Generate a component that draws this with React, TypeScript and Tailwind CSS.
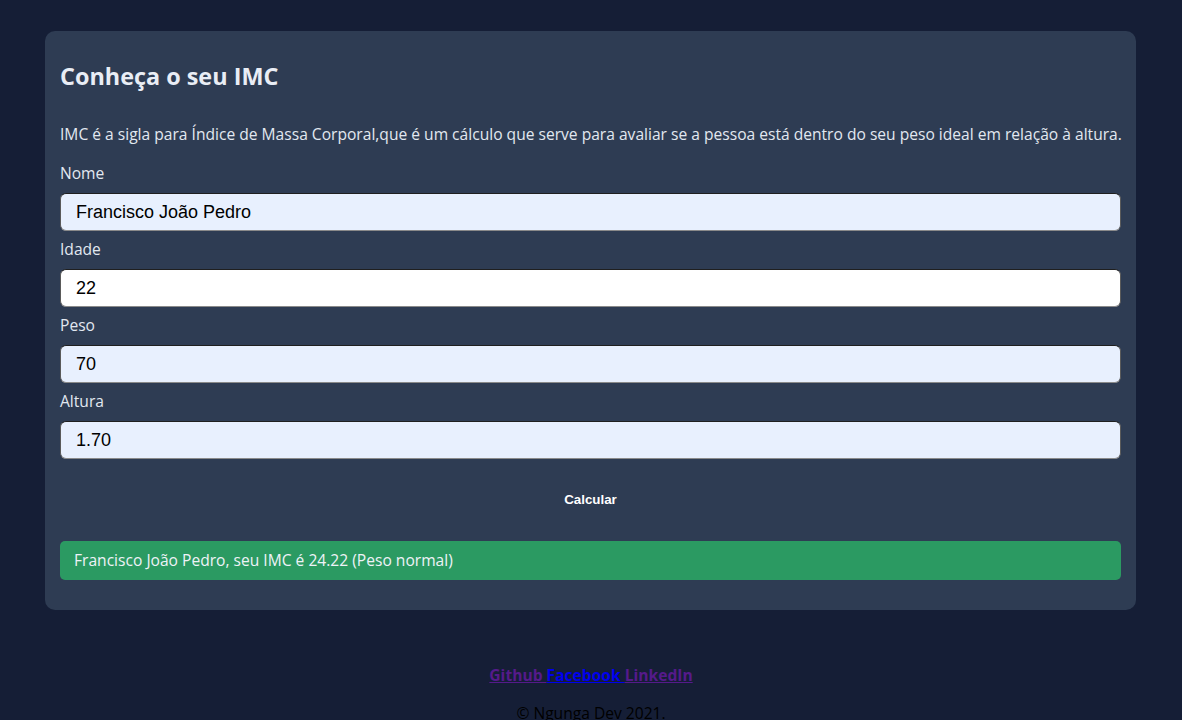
import { useState } from "react";

const fields = [
  { label: "Nome", value: "Francisco João Pedro", autofill: true },
  { label: "Idade", value: "22", autofill: false },
  { label: "Peso", value: "70", autofill: true },
  { label: "Altura", value: "1.70", autofill: true },
];

export default function App() {
  const [values, setValues] = useState(fields.map((f) => f.value));

  return (
    <div className="min-h-[720px] bg-[#151e36] pt-[31px] font-['Open_Sans',sans-serif]">
      {/* Card */}
      <div className="ml-[45px] mr-[46px] rounded-[10px] bg-[#2e3c53] px-[15px] pt-[12px] pb-[30px]">
        <h2 className="text-[23.4px] leading-[36px] font-bold text-[#e9edf5] mt-[15px]">
          Conheça o seu IMC
        </h2>
        <p className="mt-[28px] text-[15.6px] leading-[24px] text-[#e2e8f0] whitespace-nowrap">
          IMC é a sigla para Índice de Massa Corporal,que é um cálculo que serve para avaliar se a pessoa está dentro do seu peso ideal em relação à altura.
        </p>

        <div className="mt-[15px] flex flex-col">
          {fields.map((f, i) => (
            <div key={f.label} className="flex flex-col mb-[6px]">
              <label className="text-[15.6px] leading-[24px] text-[#e2e8f0]">{f.label}</label>
              <input
                value={values[i]}
                onChange={(e) => {
                  const next = [...values];
                  next[i] = e.target.value;
                  setValues(next);
                }}
                className={`mt-[8px] h-[38px] w-full rounded-[6px] border border-t-[#1f1f1f] border-x-[#5a5a5a] border-b-[#8a8a8a] px-[15px] font-['Liberation_Sans',Arial,sans-serif] text-[18px] text-black outline-none ${
                  f.autofill ? "bg-[#e8f0fe]" : "bg-white"
                }`}
              />
            </div>
          ))}
        </div>

        <div className="mt-[15px] flex h-[40px] items-center justify-center">
          <button className="font-['Liberation_Sans',Arial,sans-serif] text-[13.33px] font-bold text-white">
            Calcular
          </button>
        </div>

        <div className="mt-[21px] flex h-[39px] items-center rounded-[5px] bg-[#2b9a62] px-[14px] text-[15.6px] text-[#eef2f7]">
          Francisco João Pedro, seu IMC é 24.22 (Peso normal)
        </div>
      </div>

      {/* Footer */}
      <footer className="mt-[53px] text-center text-[15.6px] leading-[24px]">
        <p className="font-bold">
          <a href="#" className="text-[#551a8b] underline">Github </a>
          <a href="#" className="text-[#0000ee] underline">Facebook </a>
          <a href="#" className="text-[#551a8b] underline">LinkedIn</a>
        </p>
        <p className="mt-[14px] text-black">© Ngunga Dev 2021.</p>
      </footer>
    </div>
  );
}
